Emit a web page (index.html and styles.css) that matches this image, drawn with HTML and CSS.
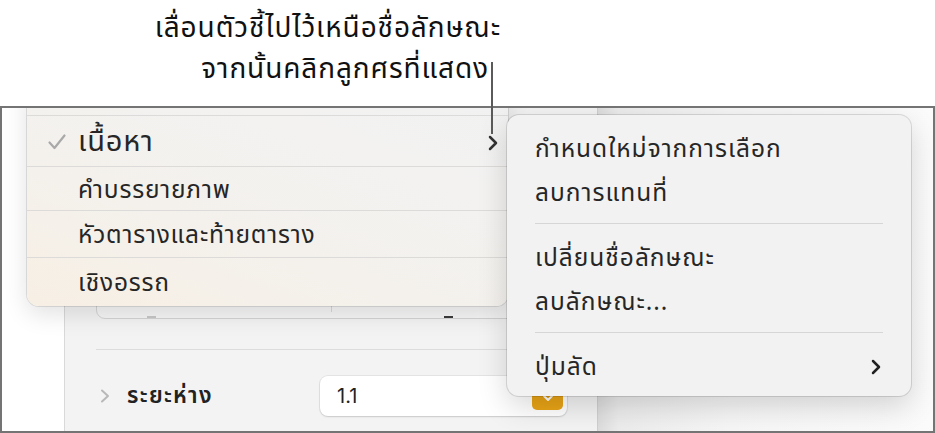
FILE: index.html
```html
<!DOCTYPE html>
<html lang="th">
<head>
<meta charset="utf-8">
<link rel="stylesheet" href="styles.css">
</head>
<body>
<div class="page">
  <div class="callout">
    <p class="callout-line">เลื่อนตัวชี้ไปไว้เหนือชื่อลักษณะ</p>
    <p class="callout-line second">จากนั้นคลิกลูกศรที่แสดง</p>
  </div>
  <div class="leader"></div>
  <div class="shot">
    <div class="shot-inner">
      <div class="strip"></div>
      <div class="panel">
        <div class="fieldbox">
          <span class="mark mark-a"></span>
          <span class="fieldbox-div"></span>
          <span class="mark mark-b"></span>
        </div>
        <div class="sep"></div>
        <div class="spacing-row">
          <svg class="disclosure" width="12" height="16" viewBox="0 0 12 16"><path d="M3 2.5 L9 8 L3 13.5" fill="none" stroke="#b8b8b8" stroke-width="2" stroke-linecap="round" stroke-linejoin="round"/></svg>
          <span class="spacing-label">ระยะห่าง</span>
          <div class="select">
            <span class="select-value">1.1</span>
            <span class="select-btn"><svg width="14" height="10" viewBox="0 0 14 10"><path d="M3 3 L7 7 L11 3" fill="none" stroke="#fff" stroke-width="2" stroke-linecap="round" stroke-linejoin="round"/></svg></span>
          </div>
        </div>
      </div>
      <div class="window"></div>

      <div class="menu menu-styles">
        <div class="mrow mrow-top"></div>
        <div class="mrow mrow-main">
          <svg class="check" width="20" height="18" viewBox="0 0 20 18"><path d="M2.5 9.5 L7.5 15 L17.5 2.5" fill="none" stroke="#a9a9a9" stroke-width="2.2" stroke-linecap="round" stroke-linejoin="round"/></svg>
          <span class="mlabel big">เนื้อหา</span>
          <svg class="mchev" width="12" height="16" viewBox="0 0 12 16"><path d="M3 2 L9 8 L3 14" fill="none" stroke="#333" stroke-width="2.5" stroke-linecap="round" stroke-linejoin="round"/></svg>
        </div>
        <div class="mrow mrow-2"><span class="mlabel">คำบรรยายภาพ</span></div>
        <div class="mrow mrow-3"><span class="mlabel">หัวตารางและท้ายตาราง</span></div>
        <div class="mrow mrow-4"><span class="mlabel">เชิงอรรถ</span></div>
      </div>

      <div class="menu menu-sub">
        <div class="sitem">กำหนดใหม่จากการเลือก</div>
        <div class="sitem">ลบการแทนที่</div>
        <div class="ssep"></div>
        <div class="sitem">เปลี่ยนชื่อลักษณะ</div>
        <div class="sitem">ลบลักษณะ...</div>
        <div class="ssep"></div>
        <div class="sitem with-chev">ปุ่มลัด
          <svg class="schev" width="12" height="16" viewBox="0 0 12 16"><path d="M3 2 L9 8 L3 14" fill="none" stroke="#222" stroke-width="2.5" stroke-linecap="round" stroke-linejoin="round"/></svg>
        </div>
      </div>
    </div>
  </div>
</div>
</body>
</html>
```
FILE: styles.css
```css
* { box-sizing: border-box; }
html, body { margin: 0; padding: 0; }
body {
  width: 935px;
  height: 433px;
  overflow: hidden;
  background: #ffffff;
  font-family: "Noto Sans Thai", "Noto Sans", "DejaVu Sans", sans-serif;
  color: #1d1d1d;
}
.page {
  position: relative;
  width: 935px;
  height: 433px;
}
.callout {
  height: 106px;
  width: 501px;
  padding-top: 8px;
  text-align: right;
}
.callout-line {
  margin: 0;
  font-size: 28px;
  line-height: 41px;
  letter-spacing: 0.9px;
  color: #111;
  white-space: nowrap;
}
.callout-line.second { padding-right: 12px; }
.leader {
  position: absolute;
  left: 491px;
  top: 62px;
  width: 2px;
  height: 72px;
  background: #5a5a5a;
  z-index: 5;
}
.shot {
  height: 327px;
  border: 2px solid #747474;
}
.shot-inner {
  position: relative;
  height: 100%;
  display: flex;
  overflow: hidden;
}
.strip {
  width: 63px;
  background: #ffffff;
  border-right: 1px solid #d9d9d9;
}
.panel {
  width: 533px;
  background: #f3f3f3;
  padding: 0 8px 0 31px;
  border-right: 1px solid #cfcfcf;
}
.window {
  flex: 1;
  background: linear-gradient(90deg, #dcdcdc 0%, #ececec 6%, #f6f6f6 40%, #fbfbfb 100%);
}
.fieldbox {
  position: relative;
  margin-top: 150px;
  height: 61px;
  border: 1px solid #d4d4d4;
  border-radius: 9px;
  background: #f6f6f6;
}
.fieldbox-div {
  position: absolute;
  left: 234px;
  bottom: 6px;
  width: 1px;
  height: 12px;
  background: #d8d8d8;
}
.mark {
  position: absolute;
  bottom: 0;
  height: 2px;
  width: 9px;
}
.mark-a { left: 50px; background: #c8c8c8; }
.mark-b { left: 347px; background: #3a3a3a; }
.sep {
  margin-top: 30px;
  height: 1px;
  background: #dcdcdc;
}
.spacing-row {
  display: flex;
  align-items: center;
  margin-top: 26px;
  height: 40px;
}
.disclosure { margin-left: 3px; }
.spacing-label {
  margin-left: 16px;
  width: 193px;
  font-size: 22.5px;
  letter-spacing: 1.3px;
  font-weight: 600;
  color: #222;
}
.select {
  display: flex;
  align-items: center;
  justify-content: space-between;
  width: 247px;
  height: 40px;
  background: #ffffff;
  border-radius: 8px;
  box-shadow: 0 0 0 1px rgba(0,0,0,0.06), 0 1px 2px rgba(0,0,0,0.12);
  padding: 0 4px 0 17px;
}
.select-value {
  font-family: "Inter", "Liberation Sans", sans-serif;
  font-size: 20px;
  color: #222;
}
.select-btn {
  display: flex;
  align-items: center;
  justify-content: center;
  width: 31px;
  height: 24px;
  margin-top: 4px;
  background: #e9a416;
  border-radius: 5px;
}
.menu {
  position: absolute;
  z-index: 2;
}
.menu-styles {
  left: 25px;
  top: -30px;
  width: 481px;
  height: 228px;
  border-radius: 0 0 12px 12px;
  background: linear-gradient(20deg, #f7efe4 0%, #f4f1ec 35%, #f3f2f1 70%, #f1f1f1 100%);
  box-shadow: 0 0 0 1px rgba(0,0,0,0.10), 0 8px 24px rgba(0,0,0,0.12);
}
.mrow {
  display: flex;
  align-items: center;
  border-bottom: 1px solid #dcdbd9;
  padding-left: 51px;
}
.mrow-top { height: 38px; }
.mrow-main { height: 51px; position: relative; }
.mrow-2 { height: 44px; }
.mrow-3 { height: 47px; }
.mrow-4 { height: 47px; border-bottom: none; }
.check { position: absolute; left: 20px; top: 17px; }
.mchev { position: absolute; left: 460px; top: 19px; }
.mlabel {
  font-size: 24.5px;
  letter-spacing: 0.8px;
  color: #262626;
  padding-top: 3px;
}
.mlabel.big { font-size: 29px; letter-spacing: 0.8px; padding-top: 2px; }
.menu-sub {
  left: 505px;
  top: 7px;
  width: 404px;
  height: 281px;
  padding: 12px 0 7px;
  border-radius: 12px;
  background: #f2f2f2;
  box-shadow: 0 0 0 1px rgba(0,0,0,0.12), 0 10px 30px rgba(0,0,0,0.16);
}
.sitem {
  height: 44px;
  display: flex;
  align-items: center;
  padding-left: 28px;
  font-size: 24.5px;
  letter-spacing: 1px;
  color: #262626;
}
.with-chev { justify-content: space-between; padding-right: 29px; }
.ssep {
  height: 1px;
  margin: 8px 28px 12px;
  background: #d6d6d6;
}
```
